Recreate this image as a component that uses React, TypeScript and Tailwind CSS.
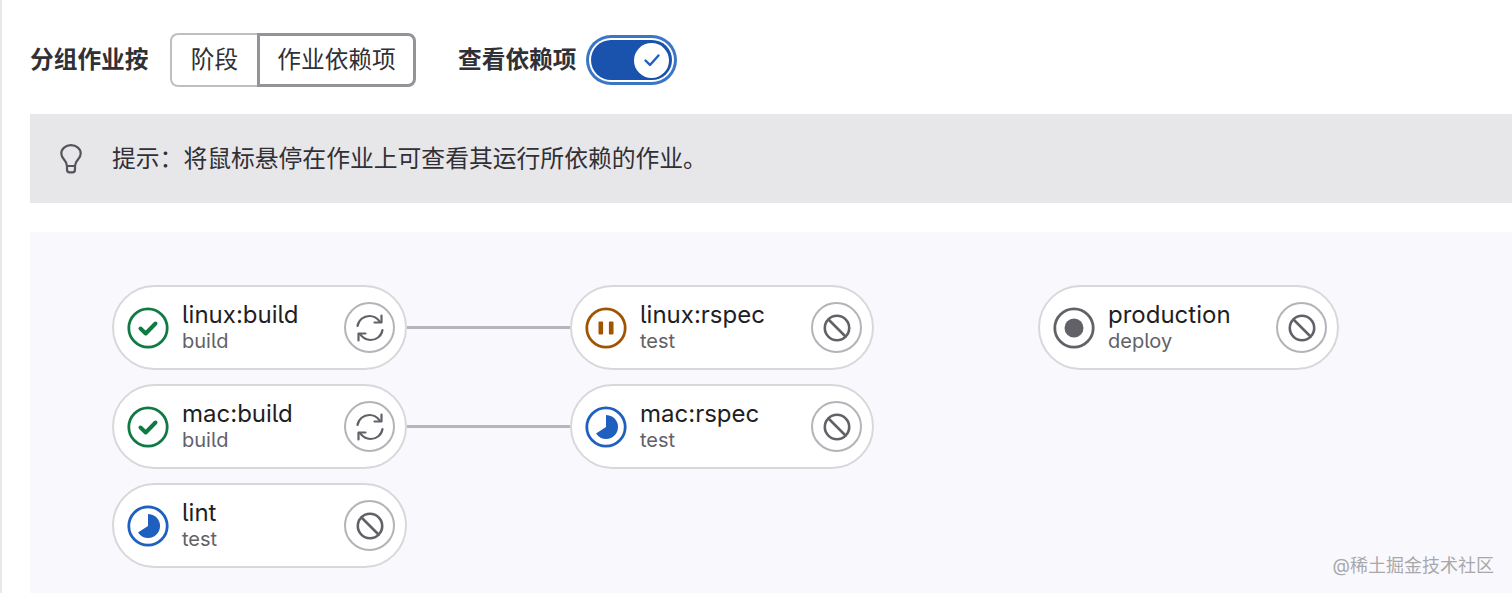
import type { ReactNode } from "react"

const cjk = "font-['Inter','Noto_Sans_CJK_SC',sans-serif]"

function SuccessIcon() {
  return (
    <svg width="42" height="42" viewBox="0 0 42 42" fill="none">
      <circle cx="21" cy="21" r="19.2" stroke="#0f7a43" strokeWidth="2.8" />
      <path d="M13.500 21.500l5.200 5 9.800-10" stroke="#0f7a43" strokeWidth="4" strokeLinecap="round" strokeLinejoin="round" />
    </svg>
  )
}

function ManualPauseIcon() {
  return (
    <svg width="42" height="42" viewBox="0 0 42 42" fill="none">
      <circle cx="21" cy="21" r="19.2" stroke="#9e5400" strokeWidth="2.8" />
      <rect x="13.500" y="14.500" width="4.600" height="13" rx="1" fill="#9e5400" />
      <rect x="23.900" y="14.500" width="4.600" height="13" rx="1" fill="#9e5400" />
    </svg>
  )
}

function RunningIcon() {
  return (
    <svg width="42" height="42" viewBox="0 0 42 42" fill="none">
      <circle cx="21" cy="21" r="19.2" stroke="#1f5fbf" strokeWidth="2.8" />
      <path d="M21 9a12 12 0 1 1-10 18.600L21 21z" fill="#1f5fbf" />
    </svg>
  )
}

function CreatedIcon() {
  return (
    <svg width="42" height="42" viewBox="0 0 42 42" fill="none">
      <circle cx="21" cy="21" r="19.2" stroke="#626168" strokeWidth="2.8" />
      <circle cx="21" cy="21" r="9.500" fill="#626168" />
    </svg>
  )
}

function RetryIcon() {
  return (
    <svg width="30" height="30" viewBox="0 0 30 30" fill="none" stroke="#626168" strokeWidth="2.200" strokeLinecap="round" strokeLinejoin="round">
      <path d="M2.500 13C3.500 7 8.500 3 14.500 3c4.500 0 7.800 2.200 10.500 5.800" />
      <path d="M26.500 2.500v7h-7" />
      <path d="M27.500 17c-1 6-6 10-12 10-4.500 0-7.800-2.200-10.500-5.800" />
      <path d="M3.500 27.500v-7h7" />
    </svg>
  )
}

function CancelIcon() {
  return (
    <svg width="28" height="28" viewBox="0 0 28 28" fill="none" stroke="#626168" strokeWidth="2.600" strokeLinecap="round">
      <circle cx="14" cy="14" r="12.200" />
      <path d="M5.500 5.500l17 17" />
    </svg>
  )
}

function BulbIcon() {
  return (
    <svg width="22" height="30" viewBox="0 0 22 30" fill="none" stroke="#55545a" strokeWidth="2.200" strokeLinecap="round" strokeLinejoin="round">
      <path d="M7 22c0-3-1.300-4.500-3-6.500C2.300 13.500 1.300 11.800 1.300 9.500 1.300 4.700 5.500 1.200 11 1.200s9.700 3.500 9.700 8.300c0 2.300-1 4-2.700 6-1.700 2-3 3.500-3 6.500z" />
      <path d="M7 22v3.500c0 1.500 1 2.800 2.500 2.800h3c1.500 0 2.500-1.300 2.500-2.800V22" />
    </svg>
  )
}

function JobPill({ name, stage, status, action, width }: { name: string; stage: string; status: ReactNode; action: ReactNode; width: string }) {
  return (
    <div className={`${width} flex h-[85px] shrink-0 items-center rounded-full border-2 border-[#d8d8dc] bg-white pr-[10px] pl-[13px]`}>
      <div className="flex h-[42px] w-[42px] shrink-0 items-center justify-center">{status}</div>
      <div className="ml-[13px] flex min-w-0 flex-1 flex-col pb-[2px]">
        <span className="text-[24px] leading-[29px] text-[#1f1e24] [font-feature-settings:'cv05']">{name}</span>
        <span className="text-[20px] leading-[24px] text-[#626168] [font-feature-settings:'cv05']">{stage}</span>
      </div>
      <div className="flex h-[51px] w-[51px] shrink-0 items-center justify-center rounded-full border-2 border-[#b4b4b8] bg-white">{action}</div>
    </div>
  )
}

function Connector() {
  return <div className="h-[3px] w-[163px] shrink-0 bg-[#b5b5bb]" />
}

export default function App() {
  return (
    <div className={`${cjk} relative h-[593px] w-[1512px] overflow-hidden border-l-2 border-[#e8e8ea] bg-white pl-[28px]`}>
      {/* Toolbar */}
      <div className="flex h-[114px] items-center pt-[6px]">
        <span className="w-[118.500px] text-[23.700px] font-bold text-[#303036]">分组作业按</span>
        <div className="ml-[21.500px] flex h-[54px]">
          <div className="flex w-[87px] items-center justify-center rounded-l-[8px] border-2 border-r-0 border-[#bfbfc3] bg-white text-[23.700px] text-[#303036]">阶段</div>
          <div className="flex w-[159px] items-center justify-center rounded-r-[8px] border-3 border-[#949498] bg-white text-[23.700px] text-[#303036]">作业依赖项</div>
        </div>
        <span className="ml-[42px] w-[118.500px] text-[23.700px] font-bold text-[#303036]">查看依赖项</span>
        <div className="ml-[14.500px] flex h-[40px] w-[81px] items-center justify-end rounded-full bg-[#1a53ad] pr-[3px] shadow-[0_0_0_2px_#ffffff,0_0_0_5px_#3a76c8]">
          <div className="flex h-[35px] w-[35px] items-center justify-center rounded-full bg-white">
            <svg width="20" height="20" viewBox="0 0 20 20" fill="none" stroke="#1f5fbf" strokeWidth="2.400" strokeLinecap="round" strokeLinejoin="round">
              <path d="M3.500 10.500l4.500 4.500 8.500-9.500" />
            </svg>
          </div>
        </div>
      </div>

      {/* Tip */}
      <div className="flex h-[89px] items-center bg-[#e7e7ea] pl-[30px]">
        <BulbIcon />
        <span className="ml-[30px] text-[23.800px] text-[#303036]">提示：将鼠标悬停在作业上可查看其运行所依赖的作业。</span>
      </div>

      {/* Pipeline graph */}
      <div className="mt-[29px] flex h-[361px] flex-col gap-[14px] bg-[#f9f9fd] pt-[53px] pl-[82px]">
        <div className="flex items-center">
          <JobPill width="w-[295px]" name="linux:build" stage="build" status={<SuccessIcon />} action={<RetryIcon />} />
          <Connector />
          <JobPill width="w-[304px]" name="linux:rspec" stage="test" status={<ManualPauseIcon />} action={<CancelIcon />} />
          <div className="w-[164px] shrink-0" />
          <JobPill width="w-[301px]" name="production" stage="deploy" status={<CreatedIcon />} action={<CancelIcon />} />
        </div>
        <div className="flex items-center">
          <JobPill width="w-[295px]" name="mac:build" stage="build" status={<SuccessIcon />} action={<RetryIcon />} />
          <Connector />
          <JobPill width="w-[304px]" name="mac:rspec" stage="test" status={<RunningIcon />} action={<CancelIcon />} />
        </div>
        <div className="flex items-center">
          <JobPill width="w-[295px]" name="lint" stage="test" status={<RunningIcon />} action={<CancelIcon />} />
        </div>
      </div>

      {/* Watermark */}
      <span className="absolute right-[18px] bottom-[16px] text-[18px] leading-[22px] text-[#a8a8ac]">@稀土掘金技术社区</span>
    </div>
  )
}
